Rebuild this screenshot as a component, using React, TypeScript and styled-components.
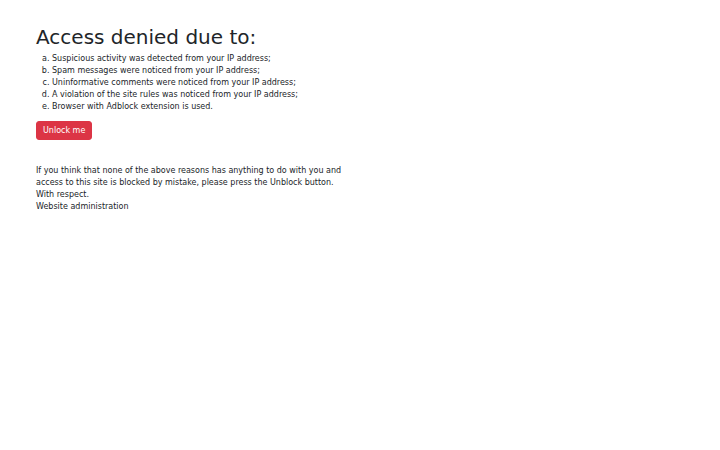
import React from "react";
import styled, { createGlobalStyle } from "styled-components";

const Global = createGlobalStyle`
  html, body { margin: 0; padding: 0; background: #fff; }
  body {
    font-family: "DejaVu Sans", sans-serif;
    font-size: 8px;
    line-height: 12px;
    color: #212529;
  }
`;

const Page = styled.main`
  padding: 25px 36px;
  display: flex;
  flex-direction: column;
  align-items: flex-start;
`;

const Title = styled.h1`
  margin: 0 0 4px;
  font-size: 20px;
  font-weight: 400;
  line-height: 24px;
`;

const Reasons = styled.ol`
  list-style: lower-alpha;
  margin: 0 0 8px;
  padding-left: 16px;
`;

const Reason = styled.li`
  padding-left: 0;
`;

const UnlockButton = styled.button`
  font-family: inherit;
  font-size: 8px;
  line-height: 12px;
  color: #fff;
  background: #dc3545;
  border: 1px solid #dc3545;
  border-radius: 3px;
  padding: 2px 6px;
  height: 19px;
  cursor: pointer;
`;

const Note = styled.p`
  margin: 25px 0 0;
`;

export default function App() {
  return (
    <>
      <Global />
      <Page>
        <Title>Access denied due to:</Title>
        <Reasons>
          <Reason>Suspicious activity was detected from your IP address;</Reason>
          <Reason>Spam messages were noticed from your IP address;</Reason>
          <Reason>Uninformative comments were noticed from your IP address;</Reason>
          <Reason>A violation of the site rules was noticed from your IP address;</Reason>
          <Reason>Browser with Adblock extension is used.</Reason>
        </Reasons>
        <UnlockButton>Unlock me</UnlockButton>
        <Note>
          If you think that none of the above reasons has anything to do with you and
          <br />
          access to this site is blocked by mistake, please press the Unblock button.
          <br />
          With respect.
          <br />
          Website administration
        </Note>
      </Page>
    </>
  );
}
